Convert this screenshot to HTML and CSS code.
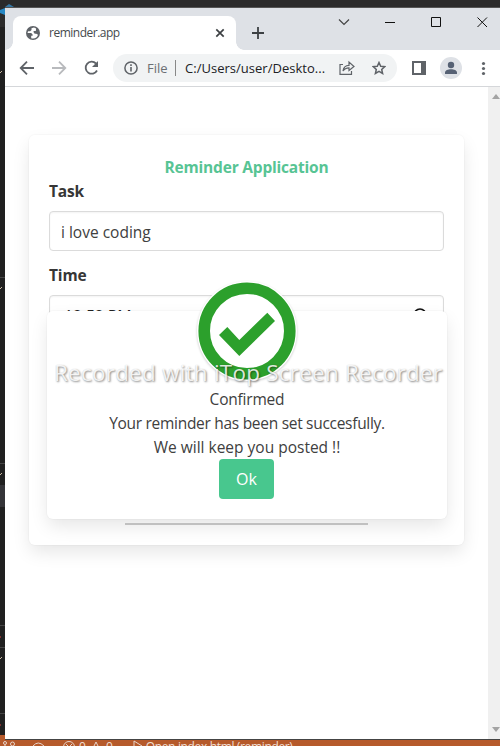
FILE: index.html
```html
<!DOCTYPE html>
<html lang="en">
<head>
<meta charset="utf-8">
<title>reminder.app</title>
<link rel="stylesheet" href="styles.css">
</head>
<body>
<div class="desktop">
  <svg class="editor" width="500" height="746" viewBox="0 0 500 746">
    <path d="M5 7l4-3 5 3" fill="#3578a5"/><path d="M0 10l5-2v7l-5-2z" fill="#2788c4"/>
    <path d="M0 27h5v708H0z" fill="#202020"/>
    <path d="M0 485h5v22H0z" fill="#343438"/>
    <path d="M0 277.500h5M0 463.500h5M0 625.500h5M0 647.500h5M0 713.500h5" stroke="#454545"/>
    <path d="M0 73l2-2M0 289l2-2M0 475l2-2M0 659l2-2" stroke="#c8b8a0"/>
    <path d="M0 637h1M0 725h1" stroke="#803030" stroke-width="2"/>
  </svg>
  <main class="window">
    <header class="tabs">
      <div class="tab">
        <svg width="14" height="14" viewBox="0 0 14 14"><circle cx="7" cy="7" r="7" fill="#5f6368"/><path d="M8 1.500L5.500 2.300v1.800L4.200 5.300H2.100L1.500 7h3.700l1.400 1.600v1.200H5.200v2.500c3.500 1 6.300-1 6.800-3.500L10.300 7.700H8.700L7.600 6.300V5h2.200l.3-2.400z" fill="#fff"/></svg>
        <span class="tab-name">reminder.app</span>
        <svg width="10" height="10" viewBox="0 0 10 10"><path d="M1.300 1.300l7.400 7.400M8.700 1.300L1.300 8.700" stroke="#3c4043" stroke-width="1.700"/></svg>
      </div>
      <svg class="new-tab" width="12" height="12" viewBox="0 0 12 12"><path d="M6 0v12M0 6h12" stroke="#3c4043" stroke-width="1.800"/></svg>
      <svg class="controls" width="160" height="28" viewBox="0 0 160 28"><path d="M4 11.500l5 5 5-5" fill="none" stroke="#444" stroke-width="1.200"/><path d="M50 14.500h10M96.500 9.500h9v9h-9zM142.500 9.500l9.500 9.500M152 9.500L142.500 19" fill="none" stroke="#111"/></svg>
    </header>
    <nav class="toolbar">
      <svg class="nav-icons" width="82" height="20" viewBox="0 0 82 20" fill="none" stroke="#5f6368" stroke-width="1.800"><path d="M15 10H2M8 3.700L1.700 10 8 16.300"/><path d="M33 10h13M40 3.700l6.300 6.300-6.300 6.300" stroke="#b8babd"/><path d="M77 5.500a6 6 0 1 0 1 7"/><path d="M79 3v6h-6z" fill="#5f6368" stroke="none"/></svg>
      <div class="address">
        <svg width="14" height="14" viewBox="0 0 14 14"><circle cx="7" cy="7" r="6.100" fill="none" stroke="#5f6368" stroke-width="1.500"/><path d="M7 6v4.500M7 3.300v1.600" stroke="#5f6368" stroke-width="1.600"/></svg>
        <span class="scheme">File</span><i></i><span class="url">C:/Users/user/Deskto...</span>
        <svg class="share" width="16" height="16" viewBox="0 0 16 16" fill="none" stroke="#5f6368" stroke-width="1.200"><path d="M4 4.500H1v9.800h11.500V11M4 11c.5-4 2.500-5.600 6-5.700V2l5 4.500-5 4V7.800c-2.500 0-4.500.6-6 3.200z"/></svg>
        <svg class="star" width="14" height="14" viewBox="0 0 14 14"><path d="M7 1.500l1.700 3.700 4 .4-3 2.800.9 4.100L7 10.400l-3.600 2.100.9-4.100-3-2.800 4-.4z" fill="none" stroke="#5f6368" stroke-width="1.500"/></svg>
      </div>
      <svg class="tools" width="76" height="24" viewBox="0 0 76 24"><path d="M1 6h12v12H1z" fill="none" stroke="#5f6368" stroke-width="2"/><path d="M9 5h5v14H9z" fill="#5f6368"/><circle cx="39" cy="12" r="11" fill="#dee1e6"/><circle cx="39" cy="9" r="3.200" fill="#566174"/><path d="M33 18v-1.500c0-4.500 12-4.500 12 0V18z" fill="#566174"/><g fill="#5f6368"><circle cx="71.500" cy="7.500" r="1.600"/><circle cx="71.500" cy="12.500" r="1.600"/><circle cx="71.500" cy="17.500" r="1.600"/></g></svg>
    </nav>
    <section class="viewport">
      <div class="page">
        <div class="card">
          <h1>Reminder Application</h1>
          <div class="label">Task</div>
          <div class="input"><span class="task-value">i love coding</span></div>
          <div class="label">Time</div>
          <div class="input time"><span>12:52 PM</span><svg width="14" height="14" viewBox="0 0 14 14"><circle cx="7" cy="7" r="6" fill="none" stroke="#111" stroke-width="1.700"/><path d="M7 3v4l3 2" fill="none" stroke="#111"/></svg></div>
          <div class="rule"></div>
        </div>
      </div>
      <div class="scrollbar"><svg width="8" height="5" viewBox="0 0 8 5"><path d="M0 5l4-5 4 5z" fill="#a3a3a3"/></svg><svg width="8" height="5" viewBox="0 0 8 5"><path d="M0 0h8L4 5z" fill="#a3a3a3"/></svg></div>
    </section>
  </main>
  <footer class="status">
    <svg width="130" height="12" viewBox="0 0 130 12" fill="none" stroke="#e8d5cc"><circle cx="5" cy="3" r="1.500"/><circle cx="12.500" cy="4" r="2"/><path d="M5 5v7M12.500 6q0 3-7 3M33 6q5-6 11 0l-5 3z"/><circle cx="69" cy="7" r="5.500"/><path d="M66 4l6 6M72 4l-6 6M92 10l4-8 4 8z"/></svg>
    <span class="errors">0</span><span class="warnings">0</span>
    <svg class="play" width="10" height="12" viewBox="0 0 10 12"><path d="M1 1l8 5-8 5z" fill="none" stroke="#e8d5cc"/></svg><span class="launch">Open index.html (reminder)</span>
  </footer>
  <div class="modal">
    <p class="m1">Confirmed</p>
    <p class="m2">Your reminder has been set succesfully.</p>
    <p class="m3">We will keep you posted !!</p>
    <button>Ok</button>
    <svg class="check" width="106" height="106" viewBox="0 0 106 106"><circle cx="53" cy="53" r="50" fill="#fff"/><circle cx="53" cy="53" r="42.800" fill="none" stroke="#2ca02c" stroke-width="11.600"/><path d="M25 57l8.300-8 12 13 28-27.300 7.700 8.300L45.300 78z" fill="#2ca02c"/></svg>
  </div>
  <div class="watermark">Recorded with iTop Screen Recorder</div>
</div>
</body>
</html>
```
FILE: styles.css
```css
* { box-sizing: border-box; }
body { margin: 0; font: 16px/24px "Open Sans", "Noto Sans", sans-serif; color: #404040; }
svg { display: block; flex: none; }
span { white-space: nowrap; }
.desktop { position: relative; width: 500px; height: 746px; overflow: hidden; background: #2b2b2b; padding: 7px 0 0 5px; }
.editor { position: absolute; left: 0; top: 0; }
.window { position: relative; z-index: 1; height: 733px; display: flex; flex-direction: column; background: #fff; border-top: 1px solid #555; border-bottom: 1px solid #444; }
.tabs { height: 42px; flex: none; background: #dee1e6; display: flex; padding: 8px 0 0 8px; }
.tab { position: relative; width: 223px; height: 34px; background: #fff; border-radius: 8px 8px 0 0; display: flex; align-items: center; padding: 0 11px 0 13px; }
.tab::before, .tab::after { content: ""; position: absolute; bottom: 0; width: 8px; height: 8px; }
.tab::before { left: -8px; background: radial-gradient(circle at 0 0, transparent 7.500px, #fff 8px); }
.tab::after { right: -8px; background: radial-gradient(circle at 100% 0, transparent 7.500px, #fff 8px); }
.tab-name { flex: 1; margin-left: 9px; font-size: 12px; letter-spacing: -.5px; color: #45494d; }
.new-tab { margin: 11px 0 0 16px; }
.controls { margin: -8px 0 0 71px; }
.toolbar { height: 37px; flex: none; display: flex; align-items: center; border-bottom: 1px solid #d5d7da; padding-left: 14px; }
.nav-icons { margin-right: 12px; }
.address { width: 284px; height: 28px; background: #f1f3f4; border-radius: 14px; display: flex; align-items: center; padding: 0 11px; }
.scheme { width: 20px; margin-left: 9px; color: #6b6f73; font-size: 13px; }
.address i { width: 1px; height: 16px; background: #888; margin: 0 9px 0 8px; }
.url { width: 142px; color: #202124; font-size: 13px; letter-spacing: .02px; }
.share { margin-left: 12px; }
.star { margin-left: 17px; }
.tools { margin-left: 15px; }
.viewport { flex: 1; display: flex; min-height: 0; }
.page { width: 483px; padding: 48px 24px 0; overflow: hidden; }
.card { width: 435px; height: 410px; padding: 20px; border-radius: 6px; box-shadow: 0 8px 18px -1px rgba(10,10,10,.1), 0 0 0 1px rgba(10,10,10,.02); }
h1 { margin: 0; text-align: center; font-size: 15.500px; line-height: 24px; letter-spacing: -.2px; height: 24px; color: #57c494; }
.label { height: 24px; margin-bottom: 8px; font-weight: 700; font-size: 15.500px; letter-spacing: -.15px; color: #363636; }
.input { height: 40px; border: 1px solid #dbdbdb; border-radius: 4px; box-shadow: inset 0 1px 2px rgba(10,10,10,.05); padding: 8px 11px; line-height: 24px; margin-bottom: 12px; }
.time { display: flex; justify-content: space-between; align-items: flex-start; padding: 8px 16px 0 14px; color: #222; }
.time span { letter-spacing: -.2px; }
.time svg { margin-top: 4px; }
.rule { width: 243px; height: 2px; background: #ccc; margin: 188px auto 0 76px; }
.scrollbar { width: 12px; background: #f0f0f0; display: flex; flex-direction: column; justify-content: space-between; align-items: flex-end; padding: 7px 0; overflow: hidden; }
.status { position: absolute; left: 0; right: 0; top: 735px; height: 18px; background: #b65a2b; color: #f0dfd5; display: flex; font-size: 12px; line-height: 18px; padding-top: 3px; }
.status svg { margin-top: 2px; }
.errors { margin-left: -51px; }
.warnings { margin-left: 20px; }
.status .play { margin-left: 20px; }
.launch { margin-left: 3px; letter-spacing: -.35px; }
.modal { position: absolute; z-index: 2; left: 47px; top: 311px; width: 400px; height: 208px; padding-top: 76px; background: #fff; border-radius: 6px; text-align: center; box-shadow: 0 8px 18px -1px rgba(10,10,10,.1), 0 0 0 1px rgba(10,10,10,.02); }
.modal p { margin: 0; height: 24px; }
.m1, .m2, .m3, .task-value { font-size: 15.500px; }
.m1 { letter-spacing: -.2px; }
.m2 { letter-spacing: -.29px; }
button { display: block; width: 55px; height: 40px; margin: 0 0 0 172px; padding: 0; border: 0; border-radius: 4px; background: #48c78e; color: #fff; font: 16px/24px "Open Sans", sans-serif; }
.check { position: absolute; left: 147px; top: -33px; filter: drop-shadow(0 1px 1px rgba(0,0,0,.2)); }
.watermark { position: absolute; z-index: 3; left: 54px; top: 357px; font-size: 22.500px; line-height: 32px; letter-spacing: .22px; white-space: nowrap; color: rgba(255,255,255,.85); text-shadow: 1px 1px 2px rgba(0,0,0,.45), 0 0 1px rgba(0,0,0,.15); }
```
